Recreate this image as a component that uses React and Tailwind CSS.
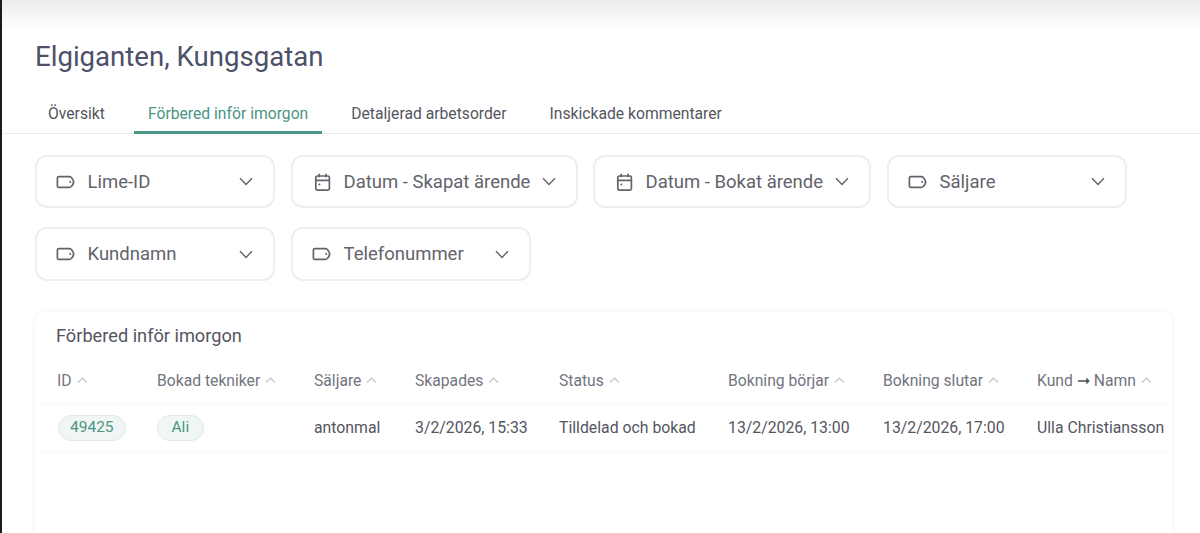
import React from "react";

const tabs = ["Översikt", "Förbered inför imorgon", "Detaljerad arbetsorder", "Inskickade kommentarer"];

const columns = ["ID", "Bokad tekniker", "Säljare", "Skapades", "Status", "Bokning börjar", "Bokning slutar"];

function LabelIcon() {
  return (
    <svg width="20" height="20" viewBox="0 0 20 20" fill="none" stroke="#62636c" strokeWidth="1.7" strokeLinejoin="round" className="shrink-0">
      <path d="M3.8 4.6h10.4c.9 0 1.6.3 2.2.9 1 1 1.9 2.7 2.3 4.5-.4 1.8-1.3 3.5-2.3 4.5-.6.6-1.3.9-2.2.9H3.8c-.8 0-1.4-.6-1.4-1.4V6c0-.8.6-1.4 1.4-1.4z" />
      <circle cx="15.2" cy="10" r="1" fill="#62636c" stroke="none" />
    </svg>
  );
}

function CalendarIcon() {
  return (
    <svg width="20" height="20" viewBox="0 0 20 20" fill="none" stroke="#62636c" strokeWidth="1.7" className="shrink-0">
      <rect x="4.8" y="4" width="13.6" height="14.2" rx="1.6" />
      <path d="M4.8 8.4h13.6M8.2 1.8v3.4M15 1.8v3.4" />
      <circle cx="8.4" cy="12.4" r="1" fill="#62636c" stroke="none" />
    </svg>
  );
}

function Chevron() {
  return (
    <svg width="14" height="9" viewBox="0 0 14 9" fill="none" stroke="#62636c" strokeWidth="1.4" className="shrink-0">
      <path d="M1 1.2L7 7.4l6-6.2" />
    </svg>
  );
}

function SortArrow() {
  return (
    <svg width="11" height="7" viewBox="0 0 11 7" fill="none" stroke="#c9cace" strokeWidth="1.3" className="ml-[5px] mt-[-1px] shrink-0">
      <path d="M1 5.5L5.5 1.2 10 5.5" />
    </svg>
  );
}

function Filter({ icon, label, width }) {
  return (
    <button className={`flex h-[53px] items-center rounded-[12px] border-2 border-[#eeeeef] bg-white pl-[18px] pr-[20px] ${width}`}>
      {icon === "tag" ? <LabelIcon /> : <CalendarIcon />}
      <span className="ml-[12.5px] pt-[2px] text-[18.5px] text-[#62636c]">{label}</span>
      <span className="ml-auto">
        <Chevron />
      </span>
    </button>
  );
}

function Pill({ children, padding }) {
  return (
    <span className={`inline-flex h-[26px] items-center rounded-full border border-[#dfe9e6] bg-[#f0f6f4] text-[15.5px] text-[#4a9583] ${padding}`}>
      {children}
    </span>
  );
}

export default function App() {
  return (
    <div className="h-[533px] overflow-hidden border-l-2 border-[#1a1a1a] bg-white font-['Roboto',sans-serif] text-[#4a4c5c]">
      <div className="h-[30px] bg-gradient-to-b from-[#ececec] to-white" />

      <h1 className="ml-[33px] mt-[9px] text-[27.6px] leading-[36px] text-[#4c5068]">Elgiganten, Kungsgatan</h1>

      <div className="mt-[20px] flex h-[39px] gap-[15px] border-b border-[#e9eaeb] pl-[32px]">
        {tabs.map((tab, i) => (
          <div
            key={tab}
            className={`-mb-px flex items-center px-[14px] pb-[2px] text-[15.7px] ${
              i === 1 ? "border-b-[3px] border-[#4a9583] pt-[3px] text-[#4a9583]" : "text-[#54565f]"
            }`}
          >
            {tab}
          </div>
        ))}
      </div>

      <div className="ml-[33px] mt-[21px] flex w-[1100px] flex-wrap gap-x-[16px] gap-y-[19px]">
        <Filter icon="tag" label="Lime-ID" width="w-[240px]" />
        <Filter icon="cal" label="Datum - Skapat ärende" width="w-[287px] -mr-px" />
        <Filter icon="cal" label="Datum - Bokat ärende" width="w-[278px]" />
        <Filter icon="tag" label="Säljare" width="w-[240px]" />
        <Filter icon="tag" label="Kundnamn" width="w-[240px] h-[54px]" />
        <Filter icon="tag" label="Telefonummer" width="w-[240px] h-[54px]" />
      </div>

      <div className="ml-[33px] mt-[31px] h-[300px] w-[1137px] rounded-[10px] bg-white pt-[14px] shadow-[0_0_6px_rgba(0,0,0,0.07)]">
        <h2 className="ml-[21px] text-[18.2px] leading-[20px] text-[#54565f]">Förbered inför imorgon</h2>

        <div className="ml-[5px] mr-[4px] mt-[26px] h-[32px] border-b border-[#f6f6f7]">
          <div className="grid grid-cols-[100px_157px_101px_144px_169px_155px_154px_1fr] pl-[17px] text-[15.7px] leading-[18px] text-[#72747f]">
            {columns.map((col) => (
              <div key={col} className="flex items-center whitespace-nowrap">
                {col}
                <SortArrow />
              </div>
            ))}
            <div className="flex items-center whitespace-nowrap">
              Kund
              <span className="mx-[4px] text-[#54565f]">➞</span>
              Namn
              <SortArrow />
            </div>
          </div>
        </div>

        <div className="ml-[5px] mr-[4px] h-[48px] border-b border-[#f6f6f7]">
          <div className="grid h-full grid-cols-[100px_157px_101px_144px_169px_155px_154px_1fr] items-center pl-[17px] text-[15.8px] text-[#54565f]">
            <div className="pl-px"><Pill padding="px-[11px]">49425</Pill></div>
            <div><Pill padding="px-[13.5px]">Ali</Pill></div>
            <div>antonmal</div>
            <div>3/2/2026, 15:33</div>
            <div>Tilldelad och bokad</div>
            <div>13/2/2026, 13:00</div>
            <div>13/2/2026, 17:00</div>
            <div className="whitespace-nowrap">Ulla Christiansson</div>
          </div>
        </div>
      </div>
    </div>
  );
}
